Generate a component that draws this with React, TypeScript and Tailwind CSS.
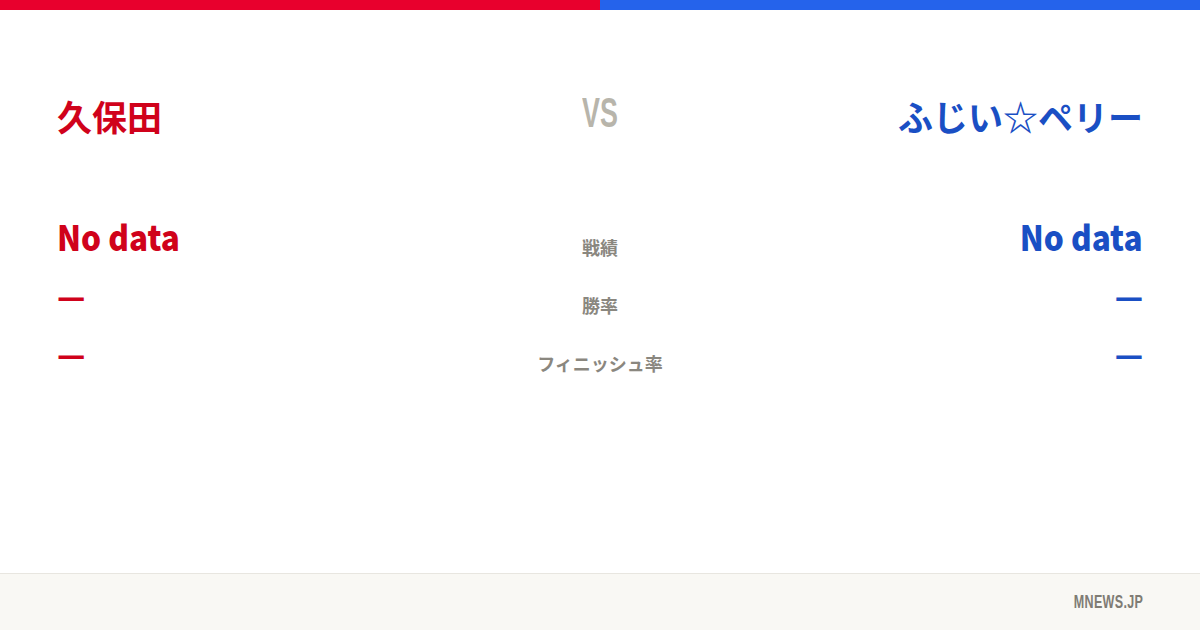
const jp = "font-['Noto_Sans_CJK_JP','Noto_Sans',sans-serif]";
const narrow = "font-['Liberation_Sans','Arial',sans-serif]";

const stats = [
  { label: "戦績", left: "No data", right: "No data", big: true },
  { label: "勝率", left: "—", right: "—", big: false },
  { label: "フィニッシュ率", left: "—", right: "—", big: false },
];

export default function App() {
  return (
    <div className={`w-[1200px] h-[630px] bg-white flex flex-col ${jp}`}>
      <div className="flex h-[10px]">
        <div className="flex-1 bg-[#e8002d]" />
        <div className="flex-1 bg-[#2563eb]" />
      </div>

      <main className="flex-1 px-[57px] pt-[80px]">
        <div className="grid grid-cols-[1fr_auto_1fr] items-center h-[50px]">
          <h1 className="text-[35px] font-bold text-[#d0021b] leading-none">久保田</h1>
          <div className={`text-[42px] font-bold text-[#b8b5ab] leading-none scale-x-[0.64] -mt-[4px] ${narrow}`}>VS</div>
          <h1 className="text-[35px] font-bold text-[#1a4fc4] leading-none text-right">ふじい☆ペリー</h1>
        </div>

        <div className="mt-[69px] flex flex-col">
          {stats.map((s) => (
            <div key={s.label} className="grid grid-cols-[1fr_auto_1fr] items-center h-[58px]">
              <div className="flex justify-start">
                <span className={`font-black text-[#d0021b] leading-none ${s.big ? "text-[35px] pb-[6px] scale-x-[0.9] origin-left" : "text-[31px] pb-[4px]"}`}>{s.left}</span>
              </div>
              <div className="text-[18px] font-bold text-[#8a877f] leading-none pt-[18px]">{s.label}</div>
              <div className="flex justify-end">
                <span className={`font-black text-[#1a4fc4] leading-none ${s.big ? "text-[35px] pb-[6px] scale-x-[0.9] origin-right" : "text-[31px] pb-[4px]"}`}>{s.right}</span>
              </div>
            </div>
          ))}
        </div>
      </main>

      <footer className="h-[57px] bg-[#f9f8f4] border-t border-[#e8e6e0] flex items-center justify-end px-[57px]">
        <span className={`text-[19px] font-bold text-[#7f7c74] tracking-wide scale-x-[0.66] origin-right ${narrow}`}>MNEWS.JP</span>
      </footer>
    </div>
  );
}
